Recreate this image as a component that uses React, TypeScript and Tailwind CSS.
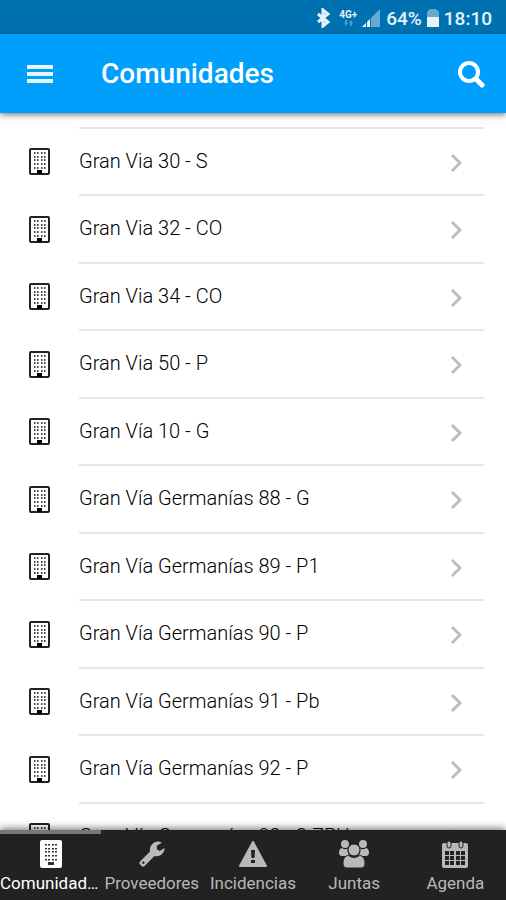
import type { ReactNode } from "react";

const communities = [
  "Gran Via 30 - S",
  "Gran Via 32 - CO",
  "Gran Via 34 - CO",
  "Gran Via 50 - P",
  "Gran Vía 10 - G",
  "Gran Vía Germanías 88 - G",
  "Gran Vía Germanías 89 - P1",
  "Gran Vía Germanías 90 - P",
  "Gran Vía Germanías 91 - Pb",
  "Gran Vía Germanías 92 - P",
  "Gran Vía Germanías 93 - 2 ZPU",
];

const windowCols = [5, 8, 12, 15];
const windowRows = [4, 8, 11, 15, 19];

function BuildingIcon() {
  return (
    <svg viewBox="0 0 21 27" className="h-[27px] w-[21px]" aria-hidden="true">
      <rect x="1" y="1" width="19" height="25" rx="1" fill="none" stroke="#222" strokeWidth="2" />
      <g fill="#444">
        {windowRows.map((y) =>
          windowCols.map((x) => <rect key={`${x}-${y}`} x={x} y={y} width="1.5" height="2" />)
        )}
      </g>
      <path fill="#000" d="M8 22h5v4H8z" />
    </svg>
  );
}

function BuildingSolidIcon() {
  return (
    <svg viewBox="0 0 22 28" className="h-7 w-[22px]" aria-hidden="true">
      <rect width="22" height="28" rx="2" fill="currentColor" />
      <g fill="#333">
        {windowRows.map((y) =>
          windowCols.map((x) => <rect key={`${x}-${y}`} x={x} y={y} width="2" height="1.500" />)
        )}
        <path d="M8 22h6v3H8z" />
      </g>
    </svg>
  );
}

function WrenchIcon() {
  return (
    <svg viewBox="0 0 26 26" className="h-[26px] w-[26px]" aria-hidden="true">
      <path
        fill="currentColor"
        fillRule="evenodd"
        d="M15.500 15 5.600 24.900a2.200 2.200 0 0 1-3.100 0L1.100 23.500a2.200 2.200 0 0 1 0-3.100L11 10.500A8.300 8.300 0 0 1 18.200.6c1.700-.1 3.300.3 4.600 1.100L17.800 4.800v3.400l3 1.700 4.700-3A8 8 0 0 1 15.500 15ZM4.300 20.600a1.200 1.200 0 1 0 .1 2.400 1.200 1.200 0 0 0-.1-2.400Z"
      />
    </svg>
  );
}

function WarningIcon() {
  return (
    <svg viewBox="0 0 28 26" className="h-[26px] w-7" aria-hidden="true">
      <path fill="currentColor" stroke="currentColor" strokeWidth="2" strokeLinejoin="round" d="M14 1 27 25H1Z" />
      <path fill="#222" d="M12 9h4l-.5 8h-3zM12 19h4v3h-4z" />
    </svg>
  );
}

function UsersIcon() {
  return (
    <svg viewBox="0 0 30 28" className="h-7 w-[30px]" fill="currentColor" aria-hidden="true">
      <circle cx="6" cy="4" r="4" />
      <circle cx="24" cy="4" r="4" />
      <path d="M3 8c2 1.500 4 1.500 6 .5-1 3 0 5 1.500 7.500H3c-2 0-3-1.500-3-3.500s1-4.500 3-4.500ZM27 8c-2 1.500-4 1.500-6 .5 1 3 0 5-1.500 7.500H27c2 0 3-1.500 3-3.500s-1-4.500-3-4.500Z" />
      <path stroke="#222" d="M9.500 15.500c3.500 2.500 7.500 2.500 11 0 4 0 5.500 4 5.500 8 0 3-1.500 4.500-4 4.500H8c-2.500 0-4-1.500-4-4.500 0-4 1.500-8 5.500-8Z" />
      <circle cx="15" cy="10" r="6" stroke="#222" />
    </svg>
  );
}

function CalendarIcon() {
  return (
    <svg viewBox="0 0 26 28" className="h-7 w-[26px]" aria-hidden="true">
      <rect y="3" width="26" height="25" rx="2" fill="currentColor" />
      <rect x="5" y="1" width="4" height="7" rx="2" fill="currentColor" stroke="#222" />
      <rect x="17" y="1" width="4" height="7" rx="2" fill="currentColor" stroke="#222" />
      <g fill="#222">
        {[11, 16, 21].map((y) =>
          [3, 8, 14, 19].map((x) => <rect key={`${x}-${y}`} x={x} y={y} width="4" height="4" />)
        )}
      </g>
    </svg>
  );
}

const tabs: { label: string; icon: ReactNode }[] = [
  { label: "Comunidades", icon: <BuildingSolidIcon /> },
  { label: "Proveedores", icon: <WrenchIcon /> },
  { label: "Incidencias", icon: <WarningIcon /> },
  { label: "Juntas", icon: <UsersIcon /> },
  { label: "Agenda", icon: <CalendarIcon /> },
];

function StatusBar() {
  return (
    <div className="flex h-[34px] shrink-0 items-center justify-end bg-[#0071b0] pt-[2px] pr-[14px] text-[19px] leading-none font-medium text-[#e6f3fb]">
      <svg viewBox="0 0 14 20" className="mr-2 h-5 w-[14px]" fill="none" stroke="currentColor" strokeWidth="3" aria-label="Bluetooth">
        <path d="m2 6 10 8-5 4V2l5 4-10 8" />
      </svg>
      <div className="mr-1 flex w-5 flex-col items-center">
        <span className="text-[10px] leading-[10px] font-bold">4G+</span>
        <svg viewBox="0 0 10 6" className="h-[6px] w-[10px] fill-[#4c9fd0]" aria-hidden="true">
          <path d="M1 3h1V0h2v3h1L3 6ZM6 3h1v3h2V3h1L8 0Z" />
        </svg>
      </div>
      <svg viewBox="0 0 18 18" className="mr-[6px] h-[18px] w-[18px]" aria-label="Cobertura">
        <path fill="#66aad3" d="M18 0v18H0Z" />
        <path fill="currentColor" d="M8 10v8H0Z" />
        <path stroke="#0071b0" d="M4.500 12v6M8.500 8v10" />
      </svg>
      <span>64%</span>
      <svg viewBox="0 0 12 18" className="mx-[5px] h-[18px] w-3" aria-label="Batería">
        <path fill="#66aad3" d="M3 0h6l3 3v5H0V3Z" />
        <path fill="currentColor" d="M0 8h12v10H0Z" />
      </svg>
      <span>18:10</span>
    </div>
  );
}

export default function App() {
  return (
    <div className="flex h-screen flex-col overflow-hidden bg-white font-[Roboto,sans-serif]">
      <StatusBar />
      <header className="z-10 flex h-[79px] shrink-0 items-center bg-[#009ffc] px-[21px] text-white shadow-[0_2px_6px_rgba(0,0,0,0.5)]">
        <button aria-label="Menú" className="px-[6px] text-[#e5f5ff]">
          <svg viewBox="0 0 26 20" className="h-5 w-[26px]" fill="currentColor" aria-hidden="true">
            <path d="M0 1h26v4H0zM0 8h26v4H0zM0 15h26v4H0z" />
          </svg>
        </button>
        <h1 className="ml-[42px] flex-1 text-[28px] font-medium">Comunidades</h1>
        <button aria-label="Buscar">
          <svg viewBox="0 0 28 28" className="h-7 w-7" fill="none" stroke="currentColor" aria-hidden="true">
            <circle cx="12" cy="12" r="9" strokeWidth="4" />
            <path d="m19 19 6 6" strokeWidth="5" strokeLinecap="round" />
          </svg>
        </button>
      </header>
      <main className="min-h-0 flex-1 overflow-hidden pt-[14px]">
        <ul>
          {communities.map((name) => (
            <li key={name} className="flex h-[67px] items-stretch pr-[22px] text-black even:h-[68px]">
              <div className="flex w-[79px] shrink-0 items-center pt-[2px] pl-[29px]">
                <BuildingIcon />
              </div>
              <a href="#" className="flex flex-1 items-center justify-between border-t-2 border-[#e6e6e6] pr-[22px] text-[20px] font-light whitespace-nowrap">
                <span className="pb-[2px]">{name}</span>
                <svg viewBox="0 0 12 20" className="mt-[2px] h-5 w-3" fill="none" stroke="#bdbdbd" strokeWidth="3" aria-hidden="true">
                  <path d="m2 2 8 8-8 8" />
                </svg>
              </a>
            </li>
          ))}
        </ul>
      </main>
      <nav className="z-10 grid h-[70px] shrink-0 grid-cols-5 bg-[#222] text-[#b9b9b9] shadow-[0_-1px_8px_rgba(0,0,0,0.6)]">
        {tabs.map((tab, index) => (
          <button
            key={tab.label}
            className={`flex min-w-0 flex-col items-center border-t-4 text-[17px] ${
              index === 0 ? "border-[#777] text-white" : "border-transparent"
            }`}
          >
            <span className="flex h-[37px] items-center pt-[3px]">{tab.icon}</span>
            <span className="w-full truncate text-center leading-6">{tab.label}</span>
          </button>
        ))}
      </nav>
    </div>
  );
}
